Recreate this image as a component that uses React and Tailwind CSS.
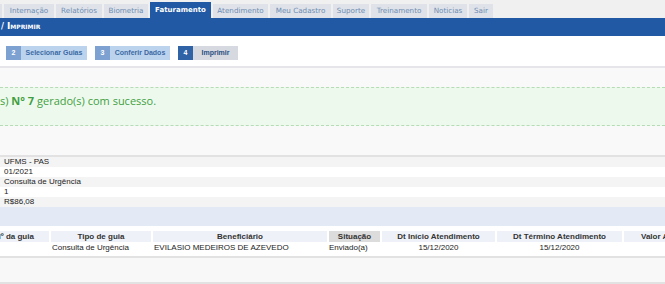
import React from 'react'

const tabs = [
  { label: '', w: 'w-[2px]' },
  { label: 'Internação', w: 'w-[50px]' },
  { label: 'Relatórios', w: 'w-[46px]' },
  { label: 'Biometria', w: 'w-[44px]' },
  { label: 'Faturamento', w: 'w-[61px]', active: true },
  { label: 'Atendimento', w: 'w-[55px]' },
  { label: 'Meu Cadastro', w: 'w-[61px]' },
  { label: 'Suporte', w: 'w-[36px]' },
  { label: 'Treinamento', w: 'w-[56px]' },
  { label: 'Noticias', w: 'w-[38px]' },
  { label: 'Sair', w: 'w-[24px]' },
]

const steps = [
  { n: '2', label: 'Selecionar Guias', w: 'w-[66px]' },
  { n: '3', label: 'Conferir Dados', w: 'w-[60px]' },
  { n: '4', label: 'Imprimir', w: 'w-[45px]', active: true },
]

const info = ['UFMS - PAS', '01/2021', 'Consulta de Urgência', '1', 'R$86,08']

const App = () => {
  return (
    <div className="w-[665px] h-[284px] overflow-hidden bg-white font-['Liberation_Sans',Arial,sans-serif]">
      {/* Abas */}
      <div className="h-[18px] bg-[#f0f0f0] flex items-end gap-[2px] font-['DejaVu_Sans',Verdana,sans-serif]">
        {tabs.map((t, i) => (
          <div
            key={i}
            className={
              t.active
                ? `${t.w} h-[16px] bg-[#2159a4] text-white font-bold text-[7px] flex items-center justify-center`
                : `${t.w} h-[14px] bg-[#dfe2e8] text-[#6d8db4] text-[7.2px] flex items-center justify-center whitespace-nowrap`
            }
          >
            {t.label}
          </div>
        ))}
      </div>

      {/* Barra azul */}
      <div className="h-[18px] bg-[#2159a4] flex items-center pl-[1px] text-white font-bold text-[9px] [font-variant:small-caps] font-['DejaVu_Sans',Verdana,sans-serif]">
        <span className="mr-[3px] text-[8px]">/</span>
        Imprimir
      </div>

      {/* Passos */}
      <div className="h-[32px] flex items-start pt-[10px] gap-[8px] pl-[6px] border-b-2 border-[#e6e6ea] text-[7px] font-bold">
        {steps.map((s) => (
          <div key={s.n} className="flex h-[14px]">
            <span className={`w-[15px] text-white flex items-center justify-center ${s.active ? 'bg-[#2f63a6]' : 'bg-[#7da2d2]'}`}>
              {s.n}
            </span>
            <span className={`${s.w} flex items-center justify-center whitespace-nowrap ${s.active ? 'bg-[#d6d9e0] text-[#2a4f80]' : 'bg-[#bcd3ee] text-[#3b6aa3]'}`}>
              {s.label}
            </span>
          </div>
        ))}
      </div>

      {/* Mensagem */}
      <div className="h-[89px] bg-[#f9f9f9] pt-[19px] border-b-2 border-[#e2e2e2]">
        <div className="h-[39px] bg-[#eef9ee] border-y border-dashed border-[#b6dcb6] pt-[5px] font-['Open_Sans','DejaVu_Sans',sans-serif] text-[11px] text-[#3f9f3f] whitespace-nowrap">
          s) <b>N° 7</b> gerado(s) com sucesso.
        </div>
      </div>

      {/* Dados */}
      <div className="text-[8px] text-[#222]">
        {info.map((v, i) => (
          <div key={v} className={`h-[10px] pl-[4px] leading-[10px] ${i % 2 === 0 ? 'bg-[#f4f4f4]' : 'bg-white'}`}>
            {v}
          </div>
        ))}
        <div className="h-[19px] bg-[#e3eaf5]" />
      </div>

      {/* Tabela */}
      <div className="pt-[5px] text-[8px] border-b-2 border-[#e2e2e2]">
        <div className="flex h-[11px] gap-[2px] font-bold text-[#333] leading-[11px] whitespace-nowrap">
          <div className="w-[49px] bg-[#eef2f8] overflow-hidden">
            <span className="-ml-[5px]">Nº da guia</span>
          </div>
          <div className="w-[100px] bg-[#eef2f8] text-center">Tipo de guia</div>
          <div className="w-[174px] bg-[#eef2f8] text-center">Beneficiário</div>
          <div className="w-[51px] bg-[#dcdcdc] text-center">Situação</div>
          <div className="w-[113px] bg-[#eef2f8] text-center">Dt Início Atendimento</div>
          <div className="w-[125px] bg-[#eef2f8] text-center">Dt Término Atendimento</div>
          <div className="flex-1 bg-[#eef2f8] overflow-hidden pl-[17px]">Valor Atendimento</div>
        </div>
        <div className="flex h-[14px] gap-[2px] text-[#222] leading-[10px] pt-[1px] whitespace-nowrap">
          <div className="w-[49px]" />
          <div className="w-[100px] pl-[1px]">Consulta de Urgência</div>
          <div className="w-[174px] pl-[1px]">EVILASIO MEDEIROS DE AZEVEDO</div>
          <div className="w-[51px]">Enviado(a)</div>
          <div className="w-[113px] text-center">15/12/2020</div>
          <div className="w-[125px] text-center">15/12/2020</div>
          <div className="flex-1" />
        </div>
      </div>
      <div className="h-[26px] bg-[#f8f8f8] border-b-2 border-[#e2e2e2]" />
    </div>
  )
}

export default App
